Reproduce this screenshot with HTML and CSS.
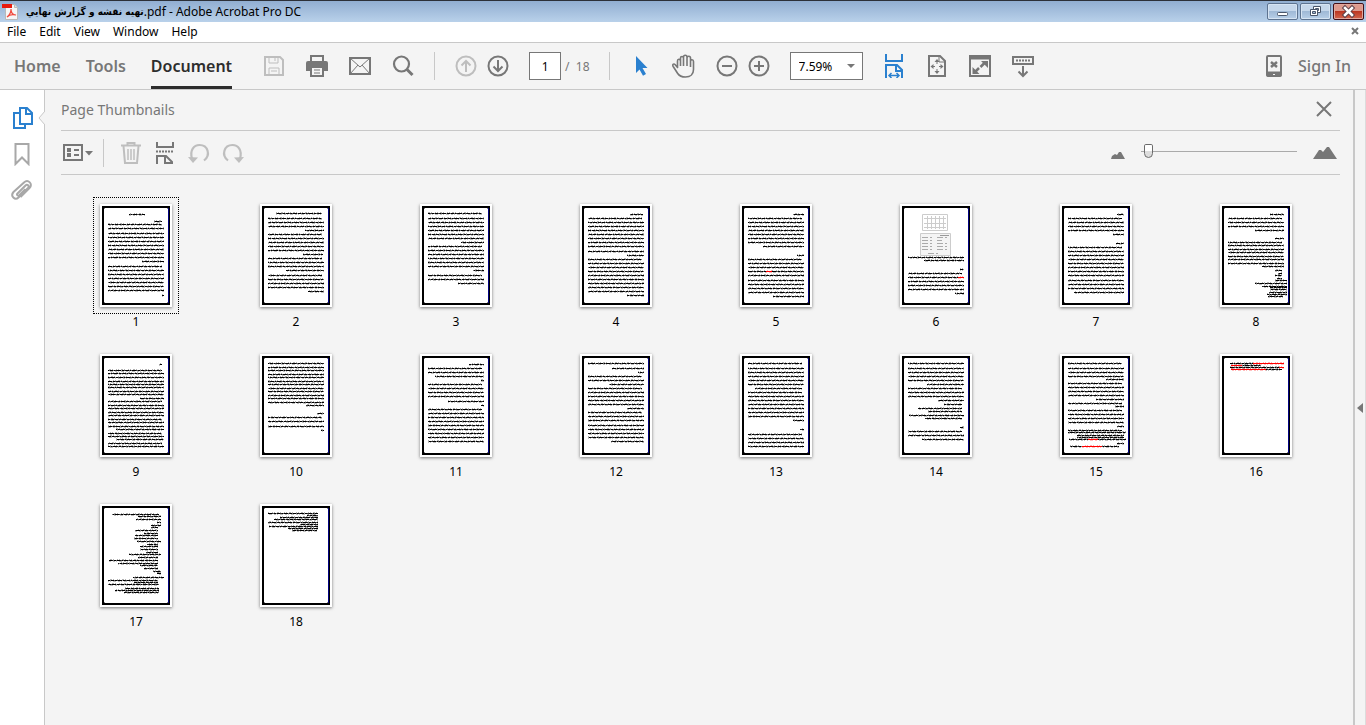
FILE: index.html
```html
<!DOCTYPE html>
<html lang="en">
<head>
    <meta charset="UTF-8">
    <meta name="viewport" content="width=device-width, initial-scale=1.0">
    <title>Adobe Acrobat Pro DC</title>
    <link rel="stylesheet" href="styles.css">
</head>
<body>
    <header class="titlebar">
        <svg class="app-icon" width="18" height="18" viewBox="0 0 18 18">
            <path d="M3.500 1.500h9l3 3v12h-12z" fill="#f6f6f6" stroke="#b9b9b9"/>
            <path d="M12.500 1.500v3h3" fill="#ddd" stroke="#b9b9b9"/>
            <path d="M0 1h10v4H0z" fill="#e8190c"/>
            <path d="M5 14c3-2 4-5 4-8 0 4 2 6 5 6-4-1-7 0-9 2z" fill="none" stroke="#f04a3e" stroke-width="1.200"/>
        </svg>
        <div class="window-title"><bdi>تهيه نقشه و گزارش نهايي</bdi><span>.pdf - Adobe Acrobat Pro DC</span></div>
        <div class="window-buttons">
            <button aria-label="Minimize"><svg width="28" height="15" viewBox="0 0 28 15"><rect x="9.500" y="8.500" width="10" height="3" rx="1" fill="#fff" stroke="#4a566a"/></svg></button>
            <button aria-label="Restore"><svg width="28" height="15" viewBox="0 0 28 15"><path d="M12.500 2.500h7v6h-7z" fill="#fff" stroke="#4a566a"/><path d="M14.500 4.500h3v2h-3z" fill="#9fb6d2" stroke="#4a566a"/><path d="M9.500 5.500h7v6h-7z" fill="#fff" stroke="#4a566a"/><path d="M11.500 7.500h3v2h-3z" fill="#9fb6d2" stroke="#4a566a"/></svg></button>
            <button class="close" aria-label="Close"><svg width="28" height="15" viewBox="0 0 28 15"><path d="M11 4l7 7M18 4l-7 7" stroke="#5c4048" stroke-width="4.500" stroke-linecap="square"/><path d="M11 4l7 7M18 4l-7 7" stroke="#fff" stroke-width="2.500" stroke-linecap="square"/></svg></button>
        </div>
    </header>

    <nav class="menubar">
        <a href="#">File</a>
        <a href="#">Edit</a>
        <a href="#">View</a>
        <a href="#">Window</a>
        <a href="#">Help</a>
        <button class="doc-close" aria-label="Close document"><svg width="9" height="9" viewBox="0 0 9 9"><path d="M1 1l6 6M7 1L1 7" stroke="#777" stroke-width="2"/></svg></button>
    </nav>

    <div class="toolbar">
        <nav class="tabs">
            <a href="#">Home</a>
            <a href="#">Tools</a>
            <a href="#" class="active">Document</a>
        </nav>
        <button class="icon off" aria-label="Save"><svg viewBox="0 0 24 24"><path d="M3 3h15l3 3v15H3z" stroke-width="2"/><path d="M7 3v6h9V3M7 21v-7h10v7M13 4v3M9 17h6"/></svg></button>
        <button class="icon" aria-label="Print"><svg viewBox="0 0 24 24"><path d="M6 8V2h12v6" stroke-width="2"/><path d="M1 9q0-2 2-2h18q2 0 2 2v8h-5v-4H6v4H1z" fill="currentColor" stroke="none"/><path d="M6 13h12v9H6z" fill="#f4f4f4" stroke-width="2"/><path d="M9 16h6M9 19h6"/></svg></button>
        <button class="icon" aria-label="Email"><svg viewBox="0 0 24 24"><path d="M2 4h20v16H2z" stroke-width="2"/><path d="M2 4l10 9 10-9M2 20l8-9M22 20l-8-9"/></svg></button>
        <button class="icon" aria-label="Find"><svg viewBox="0 0 24 24"><circle cx="10.500" cy="10" r="7.500" stroke-width="2.200"/><path d="M16 15.500l5.500 5.500" stroke-width="3"/></svg></button>
        <span class="divider"></span>
        <div class="pair">
            <button class="icon off" aria-label="Previous page"><svg viewBox="0 0 24 24"><circle cx="12" cy="12" r="9.500" stroke-width="2"/><path d="M12 18V7M7.500 11.500L12 7l4.500 4.500" stroke-width="2"/></svg></button>
            <button class="icon" aria-label="Next page"><svg viewBox="0 0 24 24"><circle cx="12" cy="12" r="9.500" stroke-width="2"/><path d="M12 6v11M7.500 12.500L12 17l4.500-4.500" stroke-width="2"/></svg></button>
        </div>
        <div class="page-no">
            <input type="text" id="page" value="1" aria-label="Page number">
            <label for="page">/&nbsp; 18</label>
        </div>
        <span class="divider"></span>
        <button class="icon blue" aria-label="Select"><svg viewBox="0 0 24 24"><path d="M7 2l11.500 12h-5l3.500 6-3 1.700-3.500-6.200L7 19z" fill="currentColor" stroke="none"/></svg></button>
        <button class="icon" aria-label="Hand"><svg viewBox="0 0 24 24"><path d="M6 14L3 10.500C1.500 9 .2 10.800 1.200 12.500l4.500 7C7.500 22.300 10 23 13.500 23c5 0 8-3 8-7.500V7.500c0-2.300-3-2.300-3 0V13m0-5V4c0-2.300-3.500-2.300-3.500 0v8m0-8V3c0-2.300-3.500-2.300-3.500 0v9m0-8C11.500 2 8.500 2 8.500 4v8M8.500 7C8 4.500 5.500 5 5.500 7v7" stroke-width="1.600"/></svg></button>
        <div class="pair">
            <button class="icon" aria-label="Zoom out"><svg viewBox="0 0 24 24"><circle cx="12" cy="12" r="9.500" stroke-width="2"/><path d="M7 12h10" stroke-width="2"/></svg></button>
            <button class="icon" aria-label="Zoom in"><svg viewBox="0 0 24 24"><circle cx="12" cy="12" r="9.500" stroke-width="2"/><path d="M7 12h10M12 7v10" stroke-width="2"/></svg></button>
        </div>
        <div class="zoom">
            <select aria-label="Zoom level">
                <option>7.59%</option>
                <option>50%</option>
                <option>100%</option>
            </select>
        </div>
        <button class="icon blue" aria-label="Scrolling pages"><svg viewBox="0 0 24 24"><path d="M4 0v7h16V0M4 24V11h11l5 5v8M14 11v6h6" stroke-width="2"/><path d="M7 21.500h10M9.500 19L7 21.500 9.500 24M14.500 19l2.500 2.500-2.500 2.500" stroke-width="1.500"/></svg></button>
        <button class="icon" aria-label="Fit page"><svg viewBox="0 0 24 24"><path d="M4 2h11l5 5v15H4z" stroke-width="2"/><path d="M14 2v6h6"/><path d="M12 5l2.500 3h-5zM12 20l2.500-3h-5zM5.500 12.500l3-2.500v5zM18.500 12.500l-3-2.500v5z" fill="currentColor" stroke="none"/><path d="M12 7v3M12 15v3M8 12.500h2M14 12.500h2"/></svg></button>
        <button class="icon" aria-label="Full screen"><svg viewBox="0 0 24 24"><path d="M2 2h20v20H2z" stroke-width="2"/><path d="M2 2h20v3H2z" fill="currentColor"/><path d="M13 7h7v7zM4.500 20v-7l7 7z" fill="currentColor" stroke="none"/><path d="M12.500 13l4-4M7 18l4-4" stroke-width="2.500"/></svg></button>
        <button class="icon" aria-label="Read mode"><svg viewBox="0 0 24 24"><path d="M2 3h20v7H2z" stroke-width="2"/><path d="M5 6.500h14" stroke-width="2" stroke-dasharray="2 1"/><path d="M12 12v10M7.500 17.500L12 22l4.500-4.500" stroke-width="2"/></svg></button>
        <div class="account">
            <button class="icon" aria-label="Mobile"><svg viewBox="0 0 24 24"><path d="M6 2h12q1 0 1 1v18q0 1-1 1H6q-1 0-1-1V3q0-1 1-1z" stroke-width="2"/><path d="M5 18h14v4H5z" fill="currentColor"/><path d="M9 8l6 5M15 8l-6 5" stroke-width="2.500"/><path d="M11 20.500h2" stroke="#f4f4f4"/></svg></button>
            <a href="#">Sign In</a>
        </div>
    </div>

    <div class="workspace">
        <aside class="side-tabs">
            <button class="icon blue" aria-label="Page thumbnails"><svg viewBox="0 0 24 24"><path d="M9 7H4v15h11v-4" stroke-width="2"/><path d="M10 2h7l5 5v11H10zM16 2v6h6" stroke-width="2"/></svg></button>
            <button class="icon" aria-label="Bookmarks"><svg viewBox="0 0 24 24"><path d="M5.500 2h13v20L12 15.500 5.500 22z" stroke-width="2"/></svg></button>
            <button class="icon" aria-label="Attachments"><svg viewBox="0 0 24 24"><path d="M7.500 15.500l8-8c1.800-1.800 4.300.5 2.500 2.500l-9.500 9.500c-3.500 3.300-8.500-1.500-5-5.500L14 4.500c4-3.700 9.500 1.500 5.500 5.500l-9 9M7.500 15.500c-1.200 1.300.5 3 1.800 1.800l6-6" stroke-width="2"/></svg></button>
            <svg class="notch" width="7" height="14" viewBox="0 0 7 14"><path d="M7 0L1 7l6 7" fill="#f4f4f4" stroke="#c8c8c8"/></svg>
        </aside>

        <main class="panel">
            <div class="panel-head">
                <h1>Page Thumbnails</h1>
                <button class="icon" aria-label="Close panel"><svg viewBox="0 0 24 24"><path d="M5 5l14 14M19 5L5 19" stroke-width="2"/></svg></button>
            </div>
            <div class="panel-tools">
                <button class="icon options" aria-label="Options"><svg viewBox="0 0 32 24"><path d="M3 4h18v15H3z" stroke-width="2"/><path d="M6 9h4M6 14h4" stroke-width="4"/><path d="M13 9h5M13 14h5" stroke-width="2"/><path d="M24 10h8l-4 4.500z" fill="currentColor" stroke="none"/></svg></button>
                <span class="divider"></span>
                <button class="icon off" aria-label="Delete pages"><svg viewBox="0 0 24 24"><path d="M2 4.500h20M8.500 4V2h7v2M4.500 5l1.500 17h12l1.500-17" stroke-width="2"/><path d="M9 8v11M12 8v11M15 8v11" stroke-width="1.500"/></svg></button>
                <button class="icon" aria-label="Split pages"><svg viewBox="0 0 24 24"><path d="M4 1v5h16V1M4 23v-8h9l6 6v2M12 15v7h8" stroke-width="2"/><path d="M3 10.500h18" stroke-width="2" stroke-dasharray="2 1"/></svg></button>
                <button class="icon off" aria-label="Rotate left"><svg viewBox="0 0 24 24"><path d="M5 17.500C2.500 9 7 4 12.500 4c8.500 0 11.500 10 4.500 15.500" stroke-width="2.200"/><path d="M1 16l10 .5L6 22z" fill="currentColor" stroke="none"/></svg></button>
                <button class="icon off" aria-label="Rotate right"><svg viewBox="0 0 24 24"><path d="M19 17.500C21.500 9 17 4 11.500 4 3 4 0 14 7 19.500" stroke-width="2.200"/><path d="M23 16l-10 .5 5 5.500z" fill="currentColor" stroke="none"/></svg></button>
                <div class="size">
                    <svg width="14" height="8" viewBox="0 0 14 8"><path d="M0 8l1-3 3-2 2 1 2-3h2l4 7z" fill="#777"/></svg>
                    <input type="range" min="0" max="100" value="2" aria-label="Thumbnail size">
                    <svg width="24" height="12" viewBox="0 0 24 12"><path d="M0 12l6-9h2l2 2 4-5h2l8 12z" fill="#777"/></svg>
                </div>
            </div>
            <div class="thumbs" id="thumbs"></div>
        </main>

        <aside class="rail">
            <button aria-label="Open tools pane"><svg width="6" height="10" viewBox="0 0 6 10"><path d="M6 0v10L0 5z" fill="#777"/></svg></button>
        </aside>
    </div>

    <script src="thumbs.js"></script>
</body>
</html>
```
FILE: styles.css
```css
* {
    box-sizing: border-box;
}
body {
    margin: 0;
    min-height: 100vh;
    display: flex;
    flex-direction: column;
    background-color: #f4f4f4;
    color: #000;
    font-family: "Noto Sans", "Open Sans", sans-serif;
    font-size: 12px;
}
button {
    padding: 0;
    border: 0;
    background: none;
}
a {
    color: inherit;
    text-decoration: none;
}
svg {
    display: block;
}
.titlebar {
    display: flex;
    align-items: center;
    height: 22px;
    padding-left: 2px;
    border-top: 1px solid #2c3038;
    background: linear-gradient(#91aed1, #b9d1ea);
}
.window-title {
    display: flex;
    align-items: center;
    margin-left: 6px;
    line-height: 20px;
    white-space: nowrap;
}
.window-title bdi {
    font-family: "DejaVu Sans Condensed", "DejaVu Sans", sans-serif;
    font-size: 10px;
    font-weight: bold;
}
.window-buttons {
    display: flex;
    gap: 2px;
    margin-left: auto;
    padding-right: 2px;
}
.window-buttons button {
    width: 31px;
    height: 17px;
    border: 1px solid #5d7390;
    border-radius: 2px;
    background: linear-gradient(#c5d7eb 45%, #9fb9d6 50%, #b8cfe8);
    box-shadow: inset 0 0 0 1px #d6e4f3;
}
.window-buttons .close {
    border-color: #431018;
    background: linear-gradient(#dd9a8e 45%, #bc3722 50%, #d3674f);
    box-shadow: inset 0 0 0 1px #e0a79d;
}
.menubar {
    display: flex;
    align-items: center;
    gap: 13px;
    height: 21px;
    padding: 0 6px 1px 7px;
    border-bottom: 1px solid #c8c8c8;
    background-color: #fff;
}
.doc-close {
    margin-left: auto;
}
.toolbar {
    display: flex;
    align-items: center;
    gap: 19px;
    height: 47px;
    padding: 0 15px 0 14px;
    border-bottom: 1px solid #c8c8c8;
}
.tabs {
    display: flex;
    gap: 25px;
    align-self: stretch;
    margin-right: 11px;
    font-size: 16px;
    font-weight: 600;
    line-height: 46px;
    color: #777;
}
.tabs .active {
    color: #2d2d2d;
    border-bottom: 3px solid #2d2d2d;
}
.icon {
    flex: none;
    width: 24px;
    height: 24px;
    color: #777;
}
.icon svg {
    width: 100%;
    height: 24px;
    fill: none;
    stroke: currentColor;
}
.icon.off {
    color: #bebebe;
}
.icon.blue {
    color: #2a80cf;
}
.divider {
    width: 1px;
    height: 28px;
    background-color: #c8c8c8;
}
.pair {
    display: flex;
    gap: 8px;
}
.page-no {
    display: flex;
    align-items: center;
    gap: 4px;
    color: #777;
}
.page-no input {
    width: 32px;
    height: 28px;
    padding: 0;
    border: 1px solid #777;
    background-color: #fff;
    font: inherit;
    color: #000;
    text-align: center;
}
.zoom {
    position: relative;
}
.zoom select {
    display: block;
    appearance: none;
    width: 73px;
    height: 28px;
    padding: 0 8px;
    border: 1px solid #777;
    border-radius: 0;
    background-color: #fff;
    font: inherit;
    color: #000;
}
.zoom::after {
    content: "";
    position: absolute;
    top: 12px;
    right: 8px;
    border: 4px solid transparent;
    border-top-color: #777;
    border-bottom: 0;
    pointer-events: none;
}
.account {
    display: flex;
    align-items: center;
    gap: 12px;
    margin-left: auto;
    font-size: 16px;
    font-weight: 500;
    color: #777;
}
.workspace {
    display: flex;
    flex: 1;
}
.side-tabs {
    position: relative;
    display: flex;
    flex-direction: column;
    align-items: center;
    gap: 12px;
    width: 45px;
    padding-top: 16px;
    border-right: 1px solid #c8c8c8;
    background-color: #fff;
}
.side-tabs .icon {
    color: #a8a8a8;
}
.side-tabs .icon.blue {
    color: #2a80cf;
}
.notch {
    position: absolute;
    top: 21px;
    right: -1px;
}
.panel {
    flex: 1;
}
.panel-head {
    display: flex;
    align-items: center;
    justify-content: space-between;
    height: 41px;
    margin: 0 13px 0 16px;
    padding: 0 4px 2px 0;
    border-bottom: 1px solid #c8c8c8;
}
.panel-head h1 {
    margin: 0;
    font-size: 14px;
    font-weight: normal;
    color: #777;
}
.panel-tools {
    display: flex;
    align-items: center;
    gap: 10px;
    height: 44px;
    margin: 0 13px 0 16px;
    border-bottom: 1px solid #c8c8c8;
}
.panel-tools .options {
    width: 32px;
}
.panel-tools .divider {
    margin-right: 5px;
}
.size {
    display: flex;
    align-items: flex-end;
    gap: 16px;
    margin-left: auto;
    padding: 0 3px 3px 0;
}
.size input {
    appearance: none;
    width: 156px;
    height: 16px;
    margin: 0;
    background: linear-gradient(#aaa, #aaa) center / 100% 1px no-repeat;
}
.size input::-webkit-slider-thumb {
    appearance: none;
    width: 9px;
    height: 14px;
    border: 1px solid #6b6b6b;
    border-radius: 2px 2px 5px 5px;
    background: linear-gradient(#fff 50%, #ddd 50%);
}
.thumbs {
    display: grid;
    grid-template-columns: repeat(auto-fill, 160px);
    padding: 22px 0 0 11px;
}
.thumb {
    display: flex;
    flex-direction: column;
    align-items: center;
    height: 150px;
    margin: 0;
}
.frame {
    padding: 6px;
    border: 1px solid transparent;
}
.frame.selected {
    border: 1px dotted #000;
}
.frame svg {
    background-color: #fff;
    box-shadow: 0 1px 3px rgba(0, 0, 0, 0.5);
}
.thumb figcaption {
    line-height: 16px;
}
.rail {
    display: flex;
    align-items: center;
    justify-content: center;
    width: 13px;
    border-left: 2px solid #c8c8c8;
    border-right: 1px solid #dcdcdc;
}
```
FILE: thumbs.js
```js
// Lines of text on each page: y for a full line, -y for an indented first line,
// [y, left, right] for a short one, plus [from, to] of any red words
var pages = [
    [[10,29,45],[17,54,62],-20,24,29,33,37,41,45,49,53,[57,42,64],-62,66,70,74,78,82,86,[91,62,64]],
    [[9,16,62],-14,18,22,[26,45,64],-30,34,38,42,46,[50,43,63],-54,58,62,[66,26,64],-71,75,79,83,[87,48,64]],
    [-9,14,18,22,26,30,34,[38,41,64],-42,46,50,54,58,62,[66,53,64],-71,75,[79,38,64]],
    [[10,50,63],-14,18,22,26,30,34,38,42,47,[51,47,64],-55,59,63,67,71,75,79,83,87,[91,47,64]],
    [[10,53,64],-14,18,22,26,30,34,38,[42,23,64],[51,57,64],-55,59,63,[67,8,64,26,32],71,76,80,84,88,[92,33,64]],
    [53,[56,24,64],[65,60,64],-69,[73,8,64,58,64],77,81,85,[89,55,64]],
    [[10,57,64],-14,18,22,26,[30,53,64],[39,56,64],-43,47,51,55,59,63,67,71,76,80,84,[88,14,64]],
    [[10,50,64],-14,18,22,[26,35,64],[34,55,64],-38,41,45,48,52,55,59,[62,42,64],[66,55,62],[69,58,62],[71,55,62],[74,57,62],[76,55,67],[79,35,67],[82,42,67],[83,50,67],[85,50,67],[88,49,67],[90,47,67],[92,48,63]],
    [[10,59,62],-16,19,23,27,30,33,37,40,[44,40,64],-47,51,54,58,61,-65,68,72,[75,16,64],-79,82,[85,16,64],-89,92],
    [9,13,16,20,23,27,30,34,37,41,44,48,[51,46,64],[59,57,64],-63,67,72,[76,61,64]],
    [[10,49,64],-14,18,[22,15,64],[26,61,64],-30,34,38,42,[47,28,64],[51,61,64],-55,59,63,67,71,75,79,83,87],
    [9,[14,32,64],[18,58,64],-22,26,[30,29,64],-34,38,42,46,50,[54,47,64],-58,62,66,71,75,79,83,[87,31,64]],
    [-9,14,18,22,26,30,[34,15,62],-38,42,46,50,54,58,62,[66,53,64],[75,60,64],-80,84,88,92],
    [9,14,18,22,26,[30,27,64],-34,38,42,[46,38,64],[50,44,62],[54,18,62],[57,28,62],[61,9,64],[64,25,62],[73,60,64],-77,81,[85,22,64]],
    [-9,14,18,22,[25,46,64],-29,33,37,41,[45,36,64],-49,[52,55,64],-56,60,64,68,[72,57,64],-76,[78,8,66],[81,17,64],[83,17,64],[85,9,66,28,38],[89,57,64],[92,10,59,22,42]],
    [[9,10,64,33,64],[11,11,41,11,22],[13,10,64,59,64],[15,11,62,11,46]],
    [[10,12,59],[12,38,61],[15,36,61],[18,57,61],[21,51,61],[23,51,58],[26,35,58],[29,44,58],[31,35,58],[34,34,58],[37,37,61],[40,47,58],[42,40,58],[45,40,58],[48,46,58],[50,29,61],[53,38,58],[56,9,58],[59,18,58],[61,40,58],[64,44,58],[67,53,61],[69,57,61],[73,33,64],[76,8,58],[78,34,58],[80,8,59],[84,25,59],[86,15,59],[88,24,59]],
    [[9,8,58],[11,47,58],[13,20,58],[15,14,58],[18,8,58],[20,40,58],[22,9,58],[24,28,58],[26,32,57]]
];

function stroke(y, from, to, color, seed) {
    var mid = y + 0.5;
    return `<path d="M${from} ${mid}H${to}" stroke="${color}" stroke-dasharray="4 .4 2 .3 5 .6 3 .4" stroke-dashoffset="${seed * 3}"/>` +
        `<path d="M${from} ${mid - 1}H${to}" stroke="${color}" stroke-opacity=".3" stroke-dasharray="1 2 2 1 1 3 1 1" stroke-dashoffset="${seed * 5}"/>` +
        `<path d="M${from} ${mid + 1}H${to}" stroke="${color}" stroke-opacity=".25" stroke-dasharray="2 1 1 2 3 2" stroke-dashoffset="${seed * 7}"/>`;
}

function drawPage(lines, number) {
    var out = '<path d="M2 2h68v99H2z" fill="#000"/><path d="M68 4h1v95h-1z" fill="#000080"/><path d="M5 4h62l1 1v93l-1 1H5l-1-1V5z" fill="#fff"/>';
    lines.forEach(function (line, i) {
        var l = Array.isArray(line) ? line : [Math.abs(line), 8, line < 0 ? 62 : 64];
        if (l.length > 3) {
            out += stroke(l[0], l[1], l[3], '#000', i + number);
            out += stroke(l[0], l[4], l[2], '#000', i + number);
            out += `<path d="M${l[3]} ${l[0] + 0.5}H${l[4]}" stroke="#f00"/>`;
            out += stroke(l[0], l[3], l[4], '#f00', i);
        } else {
            out += stroke(l[0], l[1], l[2], '#000', i + number);
        }
    });
    if (number === 6) {
        // the map and the table
        out += '<path d="M22.500 10.500h25v16h-25zM24 14.500h22M24 19.500h22M24 23.500h22M27.500 12v13M31.500 12v13M35.500 12v13M39.500 12v13M43.500 12v13" stroke="#ccc"/>';
        out += '<path d="M20.500 29.500h30v22h-30z" fill="#f4f4f4" stroke="#ccc"/><path d="M22 33.500h27M22 36.500h20M22 39.500h27M22 42.500h27M22 45.500h27M28 49.500h14" stroke="#aaa" stroke-dasharray="6 2 2 5"/><path d="M40 31.500h9" stroke="#999"/>';
    }
    return `<svg width="72" height="103" viewBox="0 0 72 103" fill="none">${out}</svg>`;
}

document.getElementById('thumbs').innerHTML = pages.map(function (lines, i) {
    var n = i + 1;
    return `<figure class="thumb"><div class="frame${n === 1 ? ' selected' : ''}">${drawPage(lines, n)}</div><figcaption>${n}</figcaption></figure>`;
}).join('');
```
